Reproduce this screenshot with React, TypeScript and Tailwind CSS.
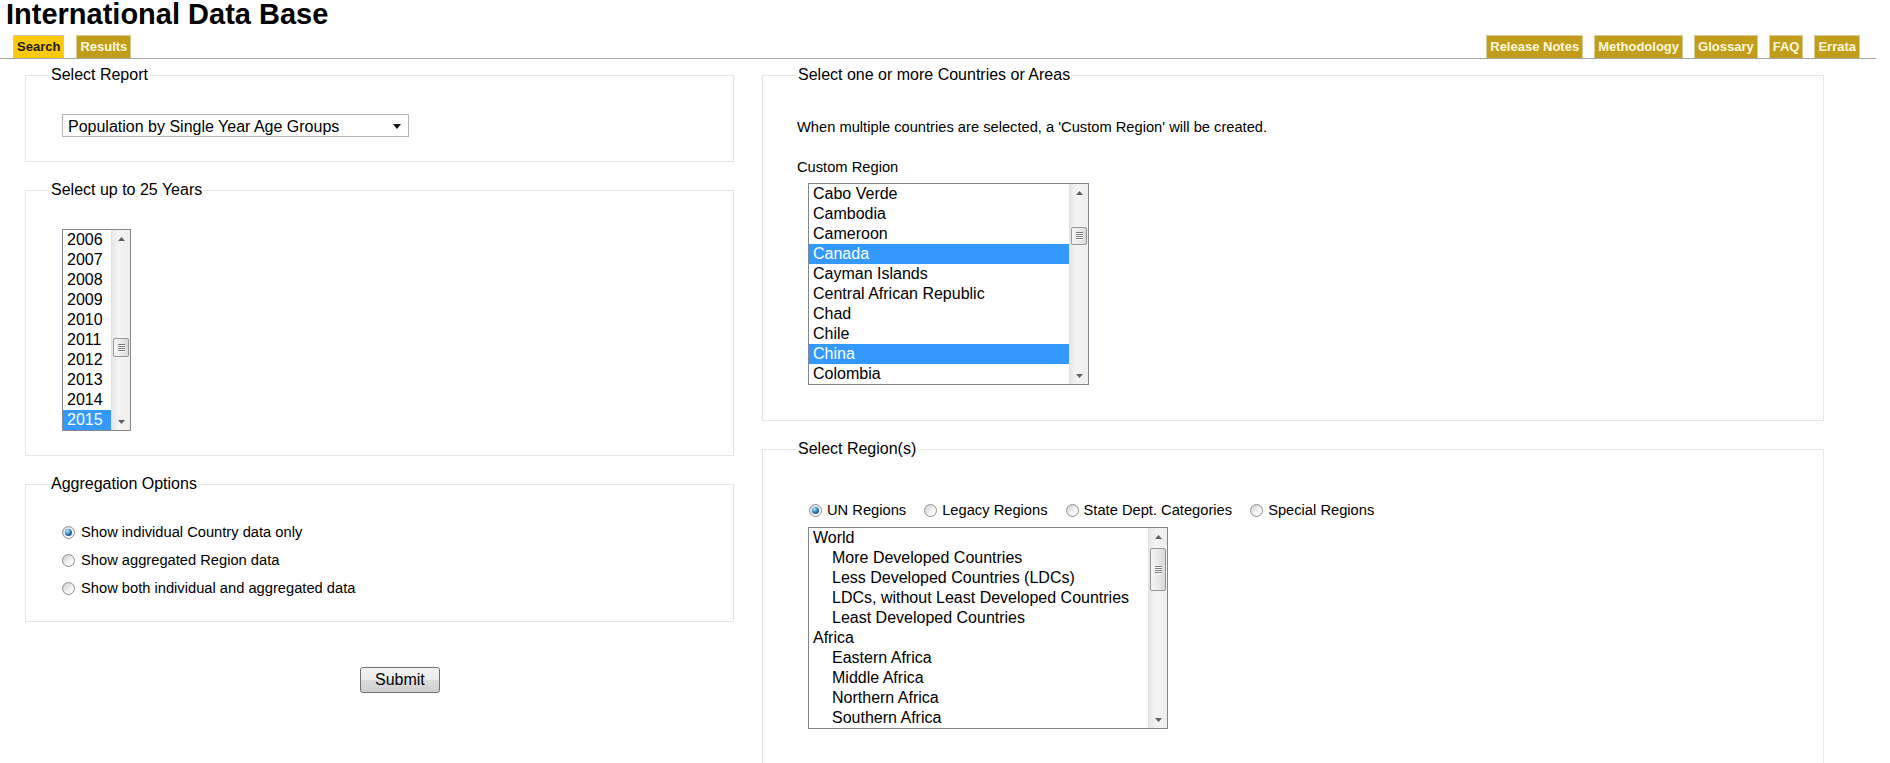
import { ReactNode } from 'react';
import clsx from 'clsx';

const YEARS = ['2006', '2007', '2008', '2009', '2010', '2011', '2012', '2013', '2014', '2015'];

const COUNTRIES = [
  'Cabo Verde',
  'Cambodia',
  'Cameroon',
  'Canada',
  'Cayman Islands',
  'Central African Republic',
  'Chad',
  'Chile',
  'China',
  'Colombia',
];

const REGIONS: { label: string; sub?: boolean }[] = [
  { label: 'World' },
  { label: 'More Developed Countries', sub: true },
  { label: 'Less Developed Countries (LDCs)', sub: true },
  { label: 'LDCs, without Least Developed Countries', sub: true },
  { label: 'Least Developed Countries', sub: true },
  { label: 'Africa' },
  { label: 'Eastern Africa', sub: true },
  { label: 'Middle Africa', sub: true },
  { label: 'Northern Africa', sub: true },
  { label: 'Southern Africa', sub: true },
];

const RIGHT_TABS = ['Release Notes', 'Methodology', 'Glossary', 'FAQ', 'Errata'];

function Tab({ label, active }: { label: string; active?: boolean }) {
  return (
    <div
      className={clsx(
        'flex h-[23px] items-center border border-b-0 px-[3px] text-[13px] font-bold',
        active
          ? 'border-[#d2c9a4] bg-[#fbc90c] text-[#1c1c1c]'
          : 'border-[#d9cc93] bg-[#c19d1b] text-[#fff8dc]'
      )}
    >
      {label}
    </div>
  );
}

function Box({
  title,
  wide,
  className,
  children,
}: {
  title: string;
  wide?: boolean;
  className?: string;
  children: ReactNode;
}) {
  return (
    <fieldset className={clsx('border border-[#e6e6e6]', className)}>
      <legend
        className={clsx(
          'px-[2px] text-[16px] leading-[18px] text-black',
          wide ? 'ml-[33px]' : 'ml-[23px]'
        )}
      >
        {title}
      </legend>
      {children}
    </fieldset>
  );
}

function Radio({ checked }: { checked?: boolean }) {
  return (
    <span className="flex h-[13px] w-[13px] shrink-0 items-center justify-center rounded-full border border-[#8e8f8f] bg-[linear-gradient(135deg,#cfcfcf,#f4f4f4_60%,#ffffff)]">
      {checked && (
        <span className="h-[7px] w-[7px] rounded-full bg-[radial-gradient(circle_at_35%_30%,#bfe9ff,#2f86c6_45%,#0c2d4f)]" />
      )}
    </span>
  );
}

function Arrow({ down }: { down?: boolean }) {
  return (
    <svg width="7" height="4" viewBox="0 0 7 4">
      <path d={down ? 'M0 0h7L3.5 4z' : 'M3.5 0L7 4H0z'} fill="#5f5f5f" />
    </svg>
  );
}

function ScrollBar({ thumbTop, thumbHeight }: { thumbTop: number; thumbHeight: number }) {
  return (
    <div className="flex w-[19px] shrink-0 flex-col border-l border-[#e3e3e3] bg-[linear-gradient(90deg,#e8e8e8,#f4f4f4_40%,#eeeeee)]">
      <div className="flex h-[17px] items-center justify-center">
        <Arrow />
      </div>
      <div className="flex-1">
        <div
          className="mx-[1px] flex items-center justify-center rounded-[2px] border border-[#979797] bg-[linear-gradient(90deg,#f6f6f6,#e9e9e9_50%,#d9d9d9)]"
          style={{ marginTop: thumbTop, height: thumbHeight }}
        >
          <svg width="7" height="8" viewBox="0 0 7 8">
            <path d="M0 0.5h7M0 2.5h7M0 4.5h7M0 6.5h7" stroke="#7a7a7a" strokeWidth="1" />
            <path d="M0 1.5h7M0 3.5h7M0 5.5h7M0 7.5h7" stroke="#ffffff" strokeWidth="1" />
          </svg>
        </div>
      </div>
      <div className="flex h-[17px] items-center justify-center">
        <Arrow down />
      </div>
    </div>
  );
}

function ListBox({
  rows,
  className,
  thumbTop,
  thumbHeight,
}: {
  rows: { label: string; selected?: boolean; sub?: boolean }[];
  className: string;
  thumbTop: number;
  thumbHeight: number;
}) {
  return (
    <div className={clsx('flex h-[202px] border border-[#828790] bg-white', className)}>
      <div className="min-w-0 flex-1">
        {rows.map((r) => (
          <div
            key={r.label}
            className={clsx(
              'h-[20px] whitespace-nowrap text-[16px] leading-[20px]',
              r.sub ? 'pl-[23px]' : 'pl-[4px]',
              r.selected ? 'bg-[#3399ff] text-white' : 'text-black'
            )}
          >
            {r.label}
          </div>
        ))}
      </div>
      <ScrollBar thumbTop={thumbTop} thumbHeight={thumbHeight} />
    </div>
  );
}

export default function App() {
  return (
    <div className="min-h-screen bg-white font-['Liberation_Sans',Arial,sans-serif] text-black">
      <h1 className="pl-[6px] text-[29px] leading-[28px] font-bold">International Data Base</h1>

      {/* tab bar */}
      <div className="mt-[7px] mr-[14px] flex items-end justify-between border-b border-[#a5a5a5] pr-[16px] pl-[13px]">
        <div className="flex gap-[12px]">
          <Tab label="Search" active />
          <Tab label="Results" />
        </div>
        <div className="flex gap-[11px]">
          {RIGHT_TABS.map((t) => (
            <Tab key={t} label={t} />
          ))}
        </div>
      </div>

      <div className="mt-[7px] flex items-start gap-[28px] pl-[25px]">
        {/* left column */}
        <div className="flex w-[709px] flex-col">
          <Box title="Select Report">
            <div className="pt-[30px] pb-[22px] pl-[36px]">
              <div className="relative w-[347px]">
                <select className="h-[23px] w-full appearance-none border border-[#b5b5b5] bg-white pl-[5px] text-[16px] text-black outline-none">
                  <option>Population by Single Year Age Groups</option>
                </select>
                <span className="pointer-events-none absolute top-[10px] right-[8px] flex">
                  <svg width="8" height="5" viewBox="0 0 8 5">
                    <path d="M0 0h8L4 5z" fill="#111" />
                  </svg>
                </span>
              </div>
            </div>
          </Box>

          <Box title="Select up to 25 Years" className="mt-[19px]">
            <div className="pt-[30px] pb-[24px] pl-[36px]">
              <ListBox
                className="w-[69px]"
                rows={YEARS.map((y) => ({ label: y, selected: y === '2015' }))}
                thumbTop={91}
                thumbHeight={19}
              />
            </div>
          </Box>

          <Box title="Aggregation Options" className="mt-[19px]">
            <div className="pt-[25px] pb-[19px] pl-[36px] text-[14.7px]">
              {[
                'Show individual Country data only',
                'Show aggregated Region data',
                'Show both individual and aggregated data',
              ].map((label, i) => (
                <label key={label} className="flex h-[28px] items-center gap-[6px]">
                  <Radio checked={i === 0} />
                  <span>{label}</span>
                </label>
              ))}
            </div>
          </Box>

          <div className="mt-[45px] pl-[335px]">
            <button className="h-[26px] rounded-[3px] border border-[#707070] bg-[linear-gradient(#f2f2f2,#ebebeb_50%,#dddddd_50%,#cfcfcf)] px-[14px] text-[16px] leading-none text-black">
              Submit
            </button>
          </div>
        </div>

        {/* right column */}
        <div className="flex w-[1062px] flex-col">
          <Box title="Select one or more Countries or Areas" wide>
            <div className="pt-[34px] pb-[35px] pl-[34px] text-[14.7px] leading-[18px]">
              <p>When multiple countries are selected, a 'Custom Region' will be created.</p>
              <p className="mt-[22px]">Custom Region</p>
              <div className="mt-[7px] ml-[11px]">
                <ListBox
                  className="w-[281px]"
                  rows={COUNTRIES.map((c) => ({ label: c, selected: c === 'Canada' || c === 'China' }))}
                  thumbTop={26}
                  thumbHeight={18}
                />
              </div>
            </div>
          </Box>

          <Box title="Select Region(s)" wide className="mt-[19px]">
            <div className="pt-[42px] pb-[34px] pl-[45px] text-[14.7px]">
              <div className="flex h-[20px] items-center gap-[18px] pl-[1px]">
                {['UN Regions', 'Legacy Regions', 'State Dept. Categories', 'Special Regions'].map((r, i) => (
                  <label key={r} className="flex items-center gap-[5px]">
                    <Radio checked={i === 0} />
                    <span>{r}</span>
                  </label>
                ))}
              </div>
              <div className="mt-[7px]">
                <ListBox className="w-[360px]" rows={REGIONS} thumbTop={3} thumbHeight={43} />
              </div>
            </div>
          </Box>
        </div>
      </div>
    </div>
  );
}
